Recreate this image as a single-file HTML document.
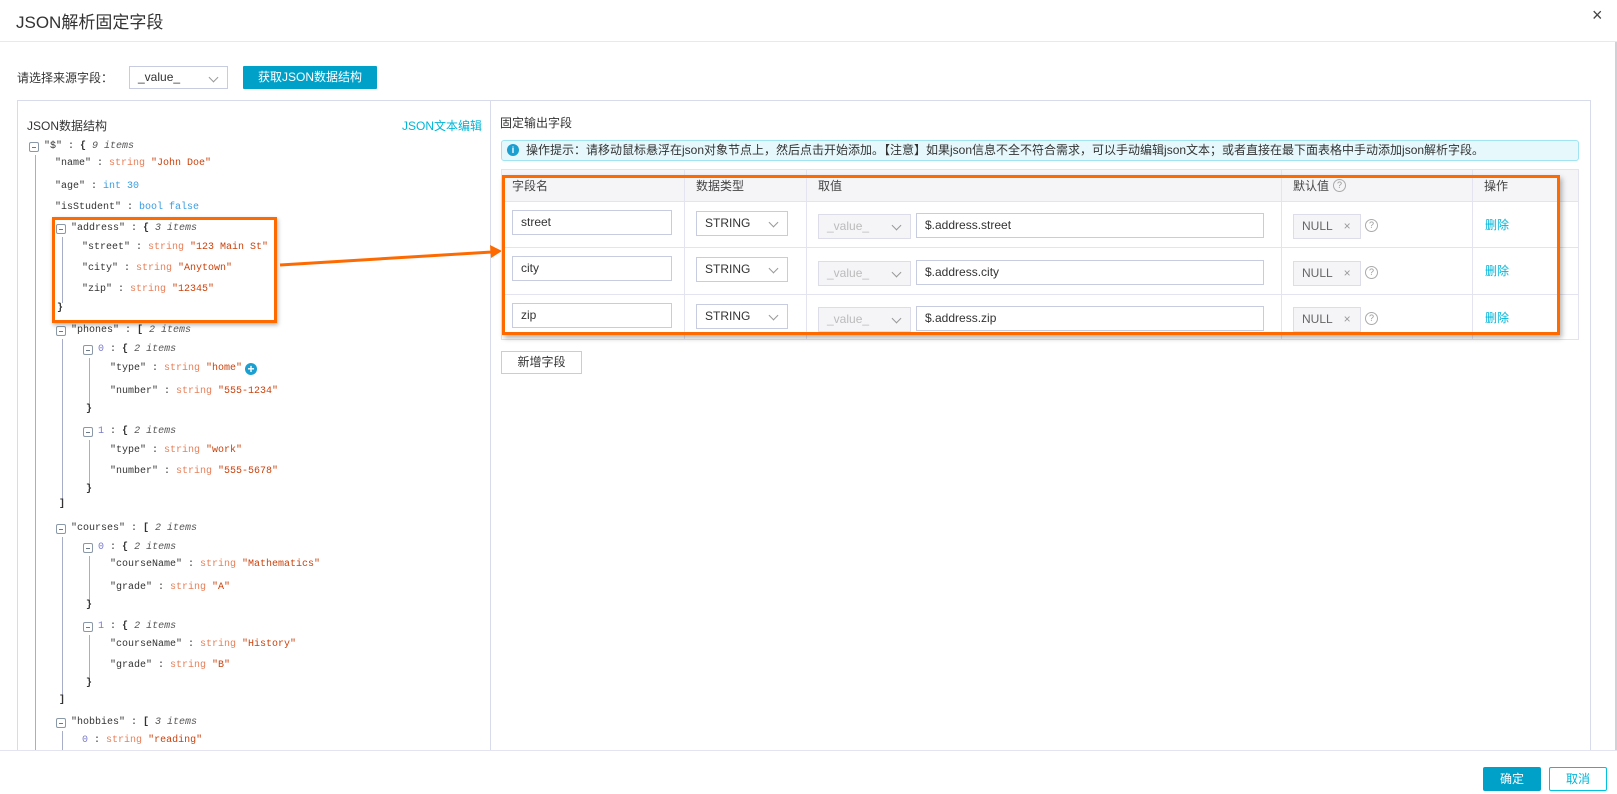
<!DOCTYPE html>
<html><head><meta charset="utf-8"><style>
*{box-sizing:border-box;margin:0;padding:0}
body{width:1617px;height:794px;background:#fff;font-family:"Liberation Sans","Noto Sans CJK SC",sans-serif;color:#333;position:relative;overflow:hidden;font-size:12px}
.a{position:absolute}
.t{position:absolute;font-family:"Liberation Mono","Noto Sans CJK SC",monospace;font-size:10px;line-height:16px;height:16px;white-space:nowrap;color:#333}
.s{color:#e8805a}.v{color:#c9420c}.n{color:#3a9ee0}.i{font-style:italic;color:#555}.k{color:#7a7acc}
.tg{position:absolute;width:10px;height:10px;border:1px solid #8a98a8;border-radius:2px;background:#fff}
.tg:after{content:"";position:absolute;left:2px;top:3.5px;width:4px;height:1px;background:#6a7888}
.vl{position:absolute;width:1px;background:#a8aec8}
.inp{position:absolute;border:1px solid #c8cce0;height:25px;line-height:23px;padding-left:8px;font-size:12px;background:#fff}
.sel:after{content:"";position:absolute;right:10px;top:7px;width:6px;height:6px;border-right:1.5px solid #999;border-bottom:1.5px solid #999;transform:rotate(45deg)}
.dis{background:#f5f5f8;color:#bbb;border-color:#dcdde8}
.hl{position:absolute;height:1px;background:#e3e4ef}
.vt{position:absolute;width:1px;background:#e3e4ef}
.q{position:absolute;width:13px;height:13px;border:1px solid #aaa;border-radius:50%;font-size:9px;line-height:11px;text-align:center;color:#999}
</style></head><body>
<div class="a" style="left:16px;top:8px;font-size:17px;color:#333">JSON解析固定字段</div>
<div class="a" style="left:1592px;top:5px;font-size:18px;color:#444">×</div>
<div class="hl" style="left:0;top:41px;width:1617px;background:#e8e8ee"></div>
<div class="a" style="left:17px;top:69px;font-size:12px">请选择来源字段：</div>
<div class="inp sel" style="left:129px;top:66px;width:99px;height:23px;line-height:21px">_value_</div>
<div class="a" style="left:243px;top:66px;width:134px;height:23px;background:#00a1c9;color:#fff;text-align:center;line-height:23px;font-size:12px;border-radius:1px">获取JSON数据结构</div>
<div class="a" style="left:17px;top:100px;width:1574px;height:651px;border:1px solid #d8dbea;border-bottom:none"></div>
<div class="vt" style="left:490px;top:100px;height:650px;background:#d8dbea"></div>
<div class="a" style="left:1615px;top:42px;width:2px;height:708px;background:#d0d0d8"></div>
<div class="a" style="left:27px;top:117px;font-size:12px">JSON数据结构</div>
<div class="a" style="left:402px;top:117px;font-size:12px;color:#00b5d8">JSON文本编辑</div>
<div class="vl" style="left:35px;top:155px;height:595px"></div>
<div class="vl" style="left:62px;top:237px;height:66px"></div>
<div class="vl" style="left:62px;top:339px;height:163px"></div>
<div class="vl" style="left:89px;top:358px;height:46px"></div>
<div class="vl" style="left:89px;top:440px;height:46px"></div>
<div class="vl" style="left:62px;top:537px;height:160px"></div>
<div class="vl" style="left:89px;top:556px;height:46px"></div>
<div class="vl" style="left:89px;top:635px;height:46px"></div>
<div class="vl" style="left:62px;top:731px;height:19px"></div>
<div class="tg" style="left:29px;top:142px"></div>
<div class="tg" style="left:56px;top:224px"></div>
<div class="tg" style="left:56px;top:326px"></div>
<div class="tg" style="left:83px;top:345px"></div>
<div class="tg" style="left:83px;top:427px"></div>
<div class="tg" style="left:56px;top:524px"></div>
<div class="tg" style="left:83px;top:543px"></div>
<div class="tg" style="left:83px;top:622px"></div>
<div class="tg" style="left:56px;top:718px"></div>
<div class="t" style="left:44px;top:139px">"$" : <b>{</b>  <span class="i">9 items</span></div>
<div class="t" style="left:55px;top:156px">"name" : <span class="s">string</span> <span class="v">"John Doe"</span></div>
<div class="t" style="left:55px;top:179px">"age" : <span class="n">int 30</span></div>
<div class="t" style="left:55px;top:200px">"isStudent" : <span class="n">bool false</span></div>
<div class="t" style="left:71px;top:221px">"address" : <b>{</b>  <span class="i">3 items</span></div>
<div class="t" style="left:82px;top:240px">"street" : <span class="s">string</span> <span class="v">"123 Main St"</span></div>
<div class="t" style="left:82px;top:261px">"city" : <span class="s">string</span> <span class="v">"Anytown"</span></div>
<div class="t" style="left:82px;top:282px">"zip" : <span class="s">string</span> <span class="v">"12345"</span></div>
<div class="t" style="left:57px;top:301px"><b>}</b></div>
<div class="t" style="left:71px;top:323px">"phones" : <b>[</b>  <span class="i">2 items</span></div>
<div class="t" style="left:98px;top:342px"><span class="k">0</span> : <b>{</b>  <span class="i">2 items</span></div>
<div class="t" style="left:110px;top:361px">"type" : <span class="s">string</span> <span class="v">"home"</span></div>
<div class="a" style="left:245px;top:363px;width:12px;height:12px;border-radius:50%;background:#1a9fd0;color:#fff;font-size:12px;line-height:12px;text-align:center;font-weight:bold">+</div>
<div class="t" style="left:110px;top:384px">"number" : <span class="s">string</span> <span class="v">"555-1234"</span></div>
<div class="t" style="left:86px;top:402px"><b>}</b></div>
<div class="t" style="left:98px;top:424px"><span class="k">1</span> : <b>{</b>  <span class="i">2 items</span></div>
<div class="t" style="left:110px;top:443px">"type" : <span class="s">string</span> <span class="v">"work"</span></div>
<div class="t" style="left:110px;top:464px">"number" : <span class="s">string</span> <span class="v">"555-5678"</span></div>
<div class="t" style="left:86px;top:482px"><b>}</b></div>
<div class="t" style="left:59px;top:497px"><b>]</b></div>
<div class="t" style="left:71px;top:521px">"courses" : <b>[</b>  <span class="i">2 items</span></div>
<div class="t" style="left:98px;top:540px"><span class="k">0</span> : <b>{</b>  <span class="i">2 items</span></div>
<div class="t" style="left:110px;top:557px">"courseName" : <span class="s">string</span> <span class="v">"Mathematics"</span></div>
<div class="t" style="left:110px;top:580px">"grade" : <span class="s">string</span> <span class="v">"A"</span></div>
<div class="t" style="left:86px;top:598px"><b>}</b></div>
<div class="t" style="left:98px;top:619px"><span class="k">1</span> : <b>{</b>  <span class="i">2 items</span></div>
<div class="t" style="left:110px;top:637px">"courseName" : <span class="s">string</span> <span class="v">"History"</span></div>
<div class="t" style="left:110px;top:658px">"grade" : <span class="s">string</span> <span class="v">"B"</span></div>
<div class="t" style="left:86px;top:676px"><b>}</b></div>
<div class="t" style="left:59px;top:693px"><b>]</b></div>
<div class="t" style="left:71px;top:715px">"hobbies" : <b>[</b>  <span class="i">3 items</span></div>
<div class="t" style="left:82px;top:733px"><span class="k">0</span> : <span class="s">string</span> <span class="v">"reading"</span></div>
<div class="a" style="left:52px;top:217px;width:225px;height:106px;border:3px solid #ff6a00;box-shadow:1px 2px 4px rgba(0,0,0,.3)"></div>
<svg class="a" style="left:270px;top:240px" width="240" height="35"><line x1="10" y1="25" x2="222" y2="12" stroke="#ff6a00" stroke-width="3"/><polygon points="232,11 220,5 221,18" fill="#ff6a00"/></svg>
<div class="a" style="left:500px;top:114px;font-size:12px">固定输出字段</div>
<div class="a" style="left:501px;top:140px;width:1078px;height:21px;background:#e6f8fc;border:1px solid #a0e4f2;border-radius:3px;font-size:12px;line-height:19px;padding-left:24px">操作提示：请移动鼠标悬浮在json对象节点上，然后点击开始添加。【注意】如果json信息不全不符合需求，可以手动编辑json文本；或者直接在最下面表格中手动添加json解析字段。</div>
<div class="a" style="left:507px;top:144px;width:12px;height:12px;border-radius:50%;background:#1a9fd0;color:#fff;font-size:9px;line-height:12px;text-align:center;font-weight:bold">i</div>
<div class="a" style="left:501px;top:169px;width:1078px;height:171px;border:1px solid #e3e4ef"></div>
<div class="a" style="left:502px;top:170px;width:1076px;height:31px;background:#f5f5f8"></div>
<div class="hl" style="left:501px;top:201px;width:1078px"></div>
<div class="hl" style="left:501px;top:247px;width:1078px"></div>
<div class="hl" style="left:501px;top:294px;width:1078px"></div>
<div class="vt" style="left:684px;top:169px;height:171px"></div>
<div class="vt" style="left:806px;top:169px;height:171px"></div>
<div class="vt" style="left:1281px;top:169px;height:171px"></div>
<div class="vt" style="left:1472px;top:169px;height:171px"></div>
<div class="a" style="left:512px;top:177px;font-size:12px;color:#444">字段名</div>
<div class="a" style="left:696px;top:177px;font-size:12px;color:#444">数据类型</div>
<div class="a" style="left:818px;top:177px;font-size:12px;color:#444">取值</div>
<div class="a" style="left:1293px;top:177px;font-size:12px;color:#444">默认值</div>
<div class="q" style="left:1333px;top:179px">?</div>
<div class="a" style="left:1484px;top:177px;font-size:12px;color:#444">操作</div>
<div class="inp" style="left:512px;top:210px;width:160px">street</div>
<div class="inp sel" style="left:696px;top:211px;width:92px">STRING</div>
<div class="inp sel dis" style="left:818px;top:214px;width:93px">_value_</div>
<div class="inp" style="left:916px;top:213px;width:348px">$.address.street</div>
<div class="inp dis" style="left:1293px;top:214px;width:68px;color:#666">NULL <span style="margin-left:8px;color:#999">×</span></div>
<div class="q" style="left:1365px;top:219px">?</div>
<div class="a" style="left:1485px;top:216px;color:#00b5d8">删除</div>
<div class="inp" style="left:512px;top:256px;width:160px">city</div>
<div class="inp sel" style="left:696px;top:257px;width:92px">STRING</div>
<div class="inp sel dis" style="left:818px;top:261px;width:93px">_value_</div>
<div class="inp" style="left:916px;top:260px;width:348px">$.address.city</div>
<div class="inp dis" style="left:1293px;top:261px;width:68px;color:#666">NULL <span style="margin-left:8px;color:#999">×</span></div>
<div class="q" style="left:1365px;top:266px">?</div>
<div class="a" style="left:1485px;top:262px;color:#00b5d8">删除</div>
<div class="inp" style="left:512px;top:303px;width:160px">zip</div>
<div class="inp sel" style="left:696px;top:304px;width:92px">STRING</div>
<div class="inp sel dis" style="left:818px;top:307px;width:93px">_value_</div>
<div class="inp" style="left:916px;top:306px;width:348px">$.address.zip</div>
<div class="inp dis" style="left:1293px;top:307px;width:68px;color:#666">NULL <span style="margin-left:8px;color:#999">×</span></div>
<div class="q" style="left:1365px;top:312px">?</div>
<div class="a" style="left:1485px;top:309px;color:#00b5d8">删除</div>
<div class="a" style="left:502px;top:175px;width:1058px;height:160px;border:3px solid #ff6a00;box-shadow:2px 3px 5px rgba(0,0,0,.3)"></div>
<div class="a" style="left:501px;top:351px;width:81px;height:23px;border:1px solid #c8cce0;text-align:center;line-height:21px;font-size:12px">新增字段</div>
<div class="hl" style="left:0;top:750px;width:1617px;background:#e3e4ef"></div>
<div class="a" style="left:1483px;top:767px;width:58px;height:24px;background:#00a1c9;color:#fff;text-align:center;line-height:24px;border-radius:2px">确定</div>
<div class="a" style="left:1549px;top:767px;width:58px;height:24px;border:1px solid #00c1de;color:#00b5d8;text-align:center;line-height:22px;border-radius:2px">取消</div>
</body></html>
